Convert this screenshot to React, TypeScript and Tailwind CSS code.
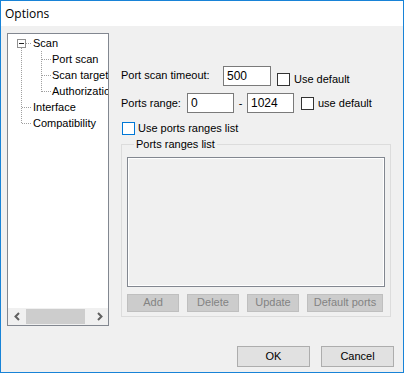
const TREE_ROWS = [
  { label: "Scan", indent: 25 },
  { label: "Port scan", indent: 44 },
  { label: "Scan target", indent: 44 },
  { label: "Authorization", indent: 44 },
  { label: "Interface", indent: 25 },
  { label: "Compatibility", indent: 25 },
];

function Checkbox({ focused = false }: { focused?: boolean }) {
  return (
    <span
      className={`inline-block w-[13px] h-[13px] shrink-0 bg-white border ${
        focused ? "border-[#0078d7]" : "border-[#333333]"
      }`}
    />
  );
}

function TextBox({ value, width }: { value: string; width: string }) {
  return (
    <div
      className={`${width} h-[20px] bg-white border border-[#7a7a7a] flex items-center pl-[3px] text-[12px]`}
    >
      {value}
    </div>
  );
}

function TreeLines() {
  return (
    <svg
      width="60"
      height="100"
      className="absolute left-0 top-0 pointer-events-none"
    >
      <g stroke="#a0a0a0" strokeDasharray="1 1" strokeWidth="1">
        <line x1="18" y1="9.5" x2="24" y2="9.5" />
        <line x1="13.5" y1="14" x2="13.5" y2="90" />
        <line x1="14" y1="73.5" x2="24" y2="73.5" />
        <line x1="14" y1="89.5" x2="24" y2="89.5" />
        <line x1="33.5" y1="17" x2="33.5" y2="58" />
        <line x1="34" y1="25.5" x2="43" y2="25.5" />
        <line x1="34" y1="41.5" x2="43" y2="41.5" />
        <line x1="34" y1="57.5" x2="43" y2="57.5" />
      </g>
      <rect x="9.5" y="5.5" width="8" height="8" fill="#fff" stroke="#919191" />
      <line x1="11" y1="9.5" x2="16" y2="9.5" stroke="#222" />
    </svg>
  );
}

function Tree() {
  return (
    <div className="ml-[6px] mt-[7px] w-[102px] h-[293px] border border-[#828790] bg-white flex flex-col">
      <div className="relative flex-1 overflow-hidden pt-[1px]">
        <TreeLines />
        {TREE_ROWS.map((row) => (
          <div
            key={row.label}
            className="h-[16px] flex items-center whitespace-nowrap"
            style={{ paddingLeft: row.indent }}
          >
            {row.label}
          </div>
        ))}
      </div>
      <div className="h-[17px] bg-[#f0f0f0] flex items-center">
        <div className="w-[17px] h-full flex items-center justify-center">
          <svg width="8" height="9" viewBox="0 0 8 9">
            <path d="M6 1 L2.5 4.5 L6 8" fill="none" stroke="#606060" strokeWidth="2" />
          </svg>
        </div>
        <div className="w-[59px] h-[15px] bg-[#cdcdcd] ml-[1px]" />
        <div className="flex-1" />
        <div className="w-[17px] h-full flex items-center justify-center">
          <svg width="8" height="9" viewBox="0 0 8 9">
            <path d="M2 1 L5.5 4.5 L2 8" fill="none" stroke="#606060" strokeWidth="2" />
          </svg>
        </div>
      </div>
    </div>
  );
}

function DisabledButton({ label, width }: { label: string; width: string }) {
  return (
    <div
      className={`${width} h-[18px] bg-[#cccccc] border border-[#bfbfbf] text-[#838383] flex items-center justify-center`}
    >
      {label}
    </div>
  );
}

export default function App() {
  return (
    <div className="w-[404px] h-[373px] border border-[#1883d7] bg-[#f0f0f0] flex flex-col font-['Liberation_Sans',Arial,sans-serif] text-[11px] text-black overflow-hidden">
      <div className="h-[25px] bg-white flex items-center pl-[4px] text-[12px] font-['Open_Sans',sans-serif] shrink-0">
        Options
      </div>

      <div className="flex">
        <Tree />

        <div className="ml-[12px] pt-[40px] flex flex-col">
          <div className="flex items-start h-[20px]">
            <span className="w-[102px] pt-[1px]">Port scan timeout:</span>
            <TextBox value="500" width="w-[48px]" />
            <div className="flex items-center ml-[6px] mt-[5px] gap-[4px]">
              <Checkbox />
              <span>Use default</span>
            </div>
          </div>

          <div className="flex items-center h-[20px] mt-[7px]">
            <span className="w-[66px]">Ports range:</span>
            <TextBox value="0" width="w-[47px]" />
            <span className="w-[13px] text-center">-</span>
            <TextBox value="1024" width="w-[47px]" />
            <div className="flex items-center ml-[7px] gap-[4px]">
              <Checkbox />
              <span>use default</span>
            </div>
          </div>

          <div className="flex items-center mt-[7px] ml-[1px] gap-[3px]">
            <Checkbox focused />
            <span>Use ports ranges list</span>
          </div>

          <fieldset className="w-[269px] border border-[#dcdcdc] mt-[1px] px-[5px] pb-[4px]">
            <legend className="ml-[7px] px-[2px] leading-[13px]">Ports ranges list</legend>
            <div className="w-[258px] h-[130px] mt-[6px] border border-[#828790] shadow-[inset_0_0_0_1px_#ffffff] bg-[#f0f0f0]" />
            <div className="flex gap-[8px] mt-[7px]">
              <DisabledButton label="Add" width="w-[52px]" />
              <DisabledButton label="Delete" width="w-[52px]" />
              <DisabledButton label="Update" width="w-[52px]" />
              <DisabledButton label="Default ports" width="w-[76px]" />
            </div>
          </fieldset>
        </div>
      </div>

      <div className="flex justify-end gap-[11px] mt-[20px] pr-[9px]">
        <div className="w-[73px] h-[21px] bg-[#e1e1e1] border border-[#adadad] flex items-center justify-center">
          OK
        </div>
        <div className="w-[73px] h-[21px] bg-[#e1e1e1] border border-[#adadad] flex items-center justify-center">
          Cancel
        </div>
      </div>
    </div>
  );
}
